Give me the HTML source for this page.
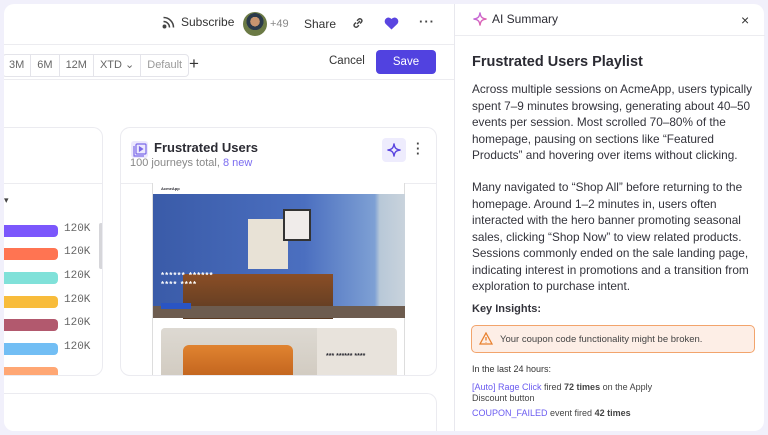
<!DOCTYPE html>
<html><head><meta charset="utf-8"><style>
*{box-sizing:border-box;margin:0;padding:0}
body{width:768px;height:435px;overflow:hidden;background:#f1f0fb;font-family:"Liberation Sans",sans-serif;color:#2b2b33;position:relative}
.main{position:absolute;left:4px;top:4px;width:452px;height:427px;background:#fff;border-radius:10px 0 0 10px;overflow:hidden}
.panel{position:absolute;left:454px;top:4px;width:310px;height:427px;background:#fff;border-left:1px solid #e8e8ee;border-radius:0 10px 10px 0}
.abs{position:absolute}
.hl{position:absolute;left:0;height:1px;background:#ececf0}
.seg{position:absolute;top:50px;height:23px;border:1px solid #e4e4ea;border-radius:4px;display:flex;font-size:11px;color:#666}
.seg div{padding:0 6px;line-height:21px;border-right:1px solid #e4e4ea}
.card{position:absolute;background:#fff;border:1px solid #ebebf0;border-radius:10px;overflow:hidden}
.bar{position:absolute;left:0;width:54px;height:12px;border-radius:0 4px 4px 0}
.lbl{position:absolute;left:60px;font-family:"Liberation Mono",monospace;font-size:11px;color:#666}
.p{font-size:11.8px;line-height:16.5px;color:#33333b;white-space:nowrap}
</style></head><body>
<div class="main">
 <div class="abs" style="left:158px;top:11px;font-size:12px;display:flex;align-items:center">
  <svg width="14" height="14" viewBox="0 0 14 14" fill="none" stroke="#444" stroke-width="1.5"><circle cx="2.5" cy="11.5" r="1.2" fill="#444"/><path d="M1.5 6.5a6 6 0 0 1 6 6M1.5 2.5a10 10 0 0 1 10 10"/></svg>
  <span style="margin-left:5px;color:#333">Subscribe</span></div>
 <div class="abs" style="left:239px;top:8px;width:24px;height:24px;border-radius:50%;background:radial-gradient(circle at 50% 40%,#c8956f 0 25%,#2b3a4a 26% 45%,#6b7a45 46%)"></div>
 <div class="abs" style="left:266px;top:14px;font-size:11px;color:#888">+49</div>
 <div class="abs" style="left:300px;top:13px;font-size:12px;color:#333">Share</div>
 <svg class="abs" style="left:347px;top:12px" width="14" height="14" viewBox="0 0 14 14" fill="none" stroke="#444" stroke-width="1.4"><path d="M6 8l3-3M5 6.5L3.5 8a2 2 0 0 0 2.8 2.8L8 9.2M9 7.5l1.5-1.5A2 2 0 0 0 7.7 3.2L6 4.8"/></svg>
 <svg class="abs" style="left:380px;top:13px" width="15" height="13" viewBox="0 0 15 13"><path d="M7.5 12.5L1.5 6.7A3.3 3.3 0 0 1 7.5 2a3.3 3.3 0 0 1 6 4.7z" fill="#5a45e0"/></svg>
 <div class="abs" style="left:415px;top:10px;font-size:13px;font-weight:bold;color:#444;letter-spacing:1px">···</div>
 <div class="hl" style="top:40px;width:452px"></div>
 <div class="seg" style="left:-2px"><div>3M</div><div>6M</div><div>12M</div><div>XTD ⌄</div><div style="border:0;color:#999">Default</div></div>
 <div class="abs" style="left:185px;top:50px;font-size:17px;color:#333">+</div>
 <div class="abs" style="left:325px;top:51px;font-size:11.5px;color:#333">Cancel</div>
 <div class="abs" style="left:372px;top:46px;width:60px;height:24px;background:#5142e0;border-radius:4px;color:#fff;font-size:11.5px;text-align:center;line-height:24px">Save</div>
 <div class="hl" style="top:75px;width:452px"></div>

 <div class="card" style="left:-10px;top:123px;width:109px;height:249px;border-left:0">
  <div class="hl" style="top:55px;width:109px"></div>
  <div class="abs" style="left:10px;top:67px;font-size:9px;color:#444">▾</div>
  <div class="abs" style="left:10px;top:0;width:100px">
   <div class="bar" style="top:97px;background:#7b57fc"></div><div class="lbl" style="top:95px">120K</div>
   <div class="bar" style="top:120px;background:#ff7452"></div><div class="lbl" style="top:118px">120K</div>
   <div class="bar" style="top:144px;background:#80e1d9"></div><div class="lbl" style="top:142px">120K</div>
   <div class="bar" style="top:168px;background:#f8bc3b"></div><div class="lbl" style="top:166px">120K</div>
   <div class="bar" style="top:191px;background:#b2596e"></div><div class="lbl" style="top:189px">120K</div>
   <div class="bar" style="top:215px;background:#72bef4"></div><div class="lbl" style="top:213px">120K</div>
   <div class="bar" style="top:239px;background:#ffa774"></div>
  </div>
  <div class="abs" style="left:105px;top:95px;width:4px;height:46px;background:#d6d6da;border-radius:2px"></div>
 </div>

 <div class="card" style="left:116px;top:123px;width:317px;height:249px">
  <div class="abs" style="left:10px;top:13px;width:17px;height:17px;background:#ece8fd;border-radius:3px"></div>
  <svg class="abs" style="left:11px;top:14px" width="16" height="16" viewBox="0 0 16 16" fill="none" stroke="#7a68e8" stroke-width="1.2"><rect x="4" y="2" width="10" height="10" rx="1"/><path d="M2 4v10h10"/><path d="M7.5 5v4l3-2z" fill="#7a68e8"/></svg>
  <div class="abs" style="left:33px;top:12px;font-size:13px;font-weight:bold;color:#2b2b33">Frustrated Users</div>
  <div class="abs" style="left:9px;top:29px;font-size:11px;color:#888">100 journeys total, <span style="color:#7b6cf0">8 new</span></div>
  <div class="abs" style="left:261px;top:10px;width:24px;height:24px;background:#eeecfd;border-radius:4px"></div>
  <svg class="abs" style="left:265px;top:14px" width="16" height="16" viewBox="0 0 16 16" fill="none" stroke="#5a45e0" stroke-width="1.4"><path d="M8 1.5C8.5 6 10 7.5 14.5 8 10 8.5 8.5 10 8 14.5 7.5 10 6 8.5 1.5 8 6 7.5 7.5 6 8 1.5z"/></svg>
  <div class="abs" style="left:295px;top:13px;font-size:13px;font-weight:bold;line-height:5px;color:#444">·<br>·<br>·</div>
  <div class="hl" style="top:55px;width:317px"></div>
  <div class="abs" style="left:31px;top:55px;width:253px;height:194px;border:1px solid #ddd;border-top:0;background:#fff">
   <div class="abs" style="left:8px;top:3px;font-size:4px;font-weight:bold">AcmeApp</div>
   <div class="abs" style="left:0;top:11px;width:252px;height:124px;background:linear-gradient(90deg,#3a5ba8 0%,#4b6fc0 60%,#7ea0d4 88%,#b8c8d8 90%,#c9d3dc 100%)">
    <div class="abs" style="left:30px;top:80px;width:150px;height:45px;background:linear-gradient(#8a4e26,#5a3a22)"></div>
    <div class="abs" style="left:95px;top:25px;width:40px;height:50px;background:#e8e2d6"></div>
    <div class="abs" style="left:130px;top:15px;width:28px;height:32px;background:#f0ecea;border:2px solid #333"></div>
    <div class="abs" style="left:0;top:112px;width:252px;height:12px;background:#6d5c4f"></div>
    <div class="abs" style="left:8px;top:77px;color:#fff;font-size:8px;font-weight:bold;letter-spacing:1px">****** ******<br>**** ****</div>
    <div class="abs" style="left:8px;top:109px;width:30px;height:6px;background:#2a55c4"></div>
   </div>
   <div class="abs" style="left:8px;top:145px;width:236px;height:60px;background:#e8e3dc;border-radius:4px;overflow:hidden">
    <div class="abs" style="left:0;top:0;width:156px;height:60px;background:linear-gradient(#ddd9d2,#cfc8bd)"></div>
    <div class="abs" style="left:22px;top:17px;width:110px;height:43px;background:linear-gradient(#e08330,#b85a18);border-radius:6px 6px 0 0"></div>
    <div class="abs" style="left:165px;top:25px;font-size:7px;font-weight:bold">*** ****** ****</div>
   </div>
  </div>
 </div>
 <div class="card" style="left:-10px;top:389px;width:443px;height:60px;border-left:0"></div>
</div>

<div class="panel">
 <svg class="abs" style="left:17px;top:7px" width="16" height="16" viewBox="0 0 16 16" fill="none" stroke-width="1.4"><defs><linearGradient id="g" x1="0" y1="0" x2="1" y2="1"><stop offset="0" stop-color="#b06cf0"/><stop offset="1" stop-color="#f0609a"/></linearGradient></defs><path stroke="url(#g)" d="M8 1.5C8.5 6 10 7.5 14.5 8 10 8.5 8.5 10 8 14.5 7.5 10 6 8.5 1.5 8 6 7.5 7.5 6 8 1.5z"/></svg>
 <div class="abs" style="left:37px;top:8px;font-size:12px;color:#2b2b33">AI Summary</div>
 <div class="abs" style="left:286px;top:8px;font-size:14px;color:#333">×</div>
 <div class="hl" style="top:31px;width:310px"></div>
 <div class="abs" style="left:17px;top:50px;font-size:14.5px;font-weight:bold;color:#2b2b33">Frustrated Users Playlist</div>
 <div class="abs p" style="left:17px;top:77px">Across multiple sessions on AcmeApp, users typically<br>spent 7–9 minutes browsing, generating about 40–50<br>events per session. Most scrolled 70–80% of the<br>homepage, pausing on sections like “Featured<br>Products” and hovering over items without clicking.</div>
 <div class="abs p" style="left:17px;top:175px">Many navigated to “Shop All” before returning to the<br>homepage. Around 1–2 minutes in, users often<br>interacted with the hero banner promoting seasonal<br>sales, clicking “Shop Now” to view related products.<br>Sessions commonly ended on the sale landing page,<br>indicating interest in promotions and a transition from<br>exploration to purchase intent.</div>
 <div class="abs" style="left:17px;top:299px;font-size:11px;font-weight:bold;color:#33333b">Key Insights:</div>
 <div class="abs" style="left:16px;top:321px;width:284px;height:28px;background:#fdeee6;border:1px solid #f2a46c;border-radius:5px">
  <svg class="abs" style="left:7px;top:6px" width="14" height="13" viewBox="0 0 14 13" fill="none" stroke="#e8802e" stroke-width="1.3"><path d="M7 1L13 12H1z"/><path d="M7 5v3.5M7 10v.5"/></svg>
  <div class="abs" style="left:28px;top:8px;font-size:9.5px;color:#444">Your coupon code functionality might be broken.</div>
 </div>
 <div class="abs" style="left:17px;top:360px;font-size:9px;color:#333">In the last 24 hours:</div>
 <div class="abs" style="left:17px;top:378px;font-size:9px;line-height:11px;color:#444;width:200px"><span style="color:#6b5cf0">[Auto] Rage Click</span> fired <b>72 times</b> on the Apply Discount button</div>
 <div class="abs" style="left:17px;top:404px;font-size:9px;color:#444"><span style="color:#6b5cf0">COUPON_FAILED</span> event fired <b>42 times</b></div>
</div>
</body></html>
